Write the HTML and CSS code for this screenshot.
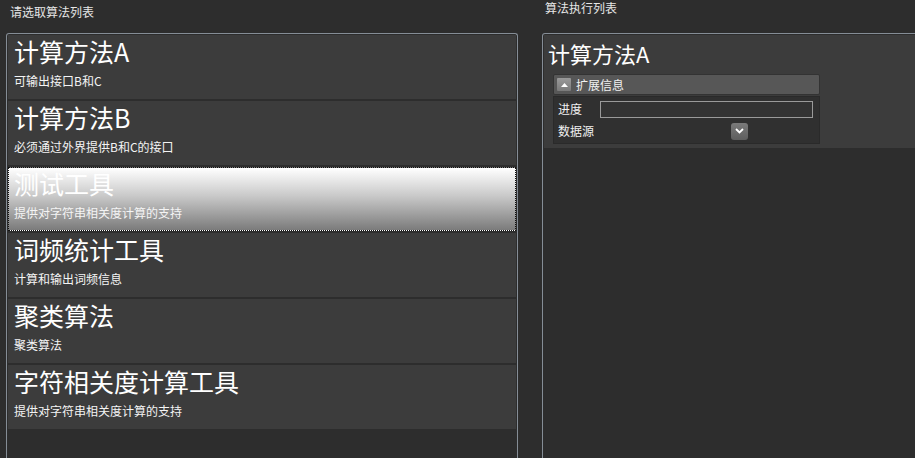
FILE: index.html
```html
<!DOCTYPE html>
<html lang="zh-CN">
<head>
<meta charset="utf-8">
<title>算法列表</title>
<link rel="stylesheet" href="styles.css">
</head>
<body>
<div class="app">
  <section class="col col-left">
    <div class="col-label">请选取算法列表</div>
    <div class="panel">
      <div class="item">
        <div class="item-title">计算方法A</div>
        <div class="item-desc">可输出接口B和C</div>
      </div>
      <div class="item">
        <div class="item-title">计算方法B</div>
        <div class="item-desc">必须通过外界提供B和C的接口</div>
      </div>
      <div class="item selected">
        <div class="item-title">测试工具</div>
        <div class="item-desc">提供对字符串相关度计算的支持</div>
      </div>
      <div class="item">
        <div class="item-title">词频统计工具</div>
        <div class="item-desc">计算和输出词频信息</div>
      </div>
      <div class="item">
        <div class="item-title">聚类算法</div>
        <div class="item-desc">聚类算法</div>
      </div>
      <div class="item">
        <div class="item-title">字符相关度计算工具</div>
        <div class="item-desc">提供对字符串相关度计算的支持</div>
      </div>
    </div>
  </section>
  <section class="col col-right">
    <div class="col-label">算法执行列表</div>
    <div class="panel">
      <div class="run-item">
        <div class="run-title">计算方法A</div>
        <div class="expander">
          <div class="exp-header">
            <span class="exp-btn"><svg width="7" height="4" viewBox="0 0 7 4"><path d="M0 4 L3.5 0 L7 4 Z" fill="#fff"/></svg></span>
            <span class="exp-text">扩展信息</span>
          </div>
          <div class="exp-body">
            <div class="row">
              <span class="row-label">进度</span>
              <span class="progress"></span>
            </div>
            <div class="row">
              <span class="row-label">数据源</span>
              <span class="dropdown"><svg width="9" height="6" viewBox="0 0 9 6"><path d="M1 1 L4.5 4.5 L8 1" fill="none" stroke="#fff" stroke-width="1.8"/></svg></span>
            </div>
          </div>
        </div>
      </div>
    </div>
  </section>
</div>
</body>
</html>
```
FILE: styles.css
```css
html, body {
  margin: 0;
  padding: 0;
  background: #2d2d2d;
  width: 915px;
  height: 458px;
  overflow: hidden;
  font-family: "Noto Sans CJK SC", "Noto Sans", sans-serif;
  color: #f2f2f2;
}

.app {
  display: flex;
  padding-left: 6px;
}

.col-left {
  width: 512px;
  flex: none;
}

.col-right {
  margin-left: 24px;
  width: 400px;
  flex: none;
}

.col-label {
  height: 33px;
  box-sizing: border-box;
  font-size: 12px;
  line-height: 16px;
  color: #e6e6e6;
}

.col-left .col-label {
  padding: 4px 0 0 4px;
}

.col-right .col-label {
  padding: 1px 0 0 3px;
  line-height: 13px;
}

.panel {
  border: 1px solid #858d96;
  border-bottom: none;
  border-radius: 3px 3px 0 0;
  height: 440px;
  padding: 1px;
  box-sizing: border-box;
}

.col-left .panel {
  display: flex;
  flex-direction: column;
  gap: 2px;
}

.item {
  height: 64px;
  box-sizing: border-box;
  background: #3c3c3c;
  padding: 2px 0 0 6px;
}

.item.selected {
  background: linear-gradient(to bottom, #ffffff 0%, #c9c9c9 45%, #7b7b7b 100%);
  border: 1px dotted #111;
  padding: 1px 0 0 5px;
}

.item-title {
  font-size: 25px;
  line-height: 29px;
  color: #ffffff;
}

.item-desc {
  margin-top: 7px;
  font-size: 12px;
  line-height: 16px;
  color: #f4f4f4;
}

.run-item {
  background: #3c3c3c;
  height: 113px;
  box-sizing: border-box;
  padding: 4px 0 0 4px;
}

.run-title {
  font-size: 22px;
  line-height: 28px;
  color: #ffffff;
}

.expander {
  margin: 7px 0 0 5px;
  width: 267px;
}

.exp-header {
  height: 21px;
  box-sizing: border-box;
  background: #575757;
  border: 1px solid #333;
  border-radius: 2px;
  display: flex;
  align-items: center;
  padding-left: 3px;
}

.exp-btn {
  width: 14px;
  height: 13px;
  background: linear-gradient(#9a9a9a, #7a7a7a);
  border-radius: 1px;
  display: flex;
  align-items: center;
  justify-content: center;
}

.exp-text {
  margin-left: 5px;
  font-size: 12px;
  line-height: 16px;
  color: #f0f0f0;
}

.exp-body {
  margin-top: 1px;
  height: 48px;
  box-sizing: border-box;
  background: #303030;
  border: 1px solid #2a2a2a;
  padding: 3px 0 0 4px;
}

.row {
  display: flex;
  align-items: center;
  height: 18px;
}

.row + .row {
  margin-top: 4px;
}

.row-label {
  width: 42px;
  font-size: 12px;
  line-height: 16px;
  color: #f0f0f0;
}

.progress {
  width: 213px;
  height: 17px;
  box-sizing: border-box;
  border: 1px solid #9a9a9a;
  background: #333;
}

.dropdown {
  margin-left: 131px;
  width: 17px;
  height: 17px;
  border-radius: 3px;
  background: linear-gradient(#7a7a7a, #5e5e5e);
  display: flex;
  align-items: center;
  justify-content: center;
}
```
